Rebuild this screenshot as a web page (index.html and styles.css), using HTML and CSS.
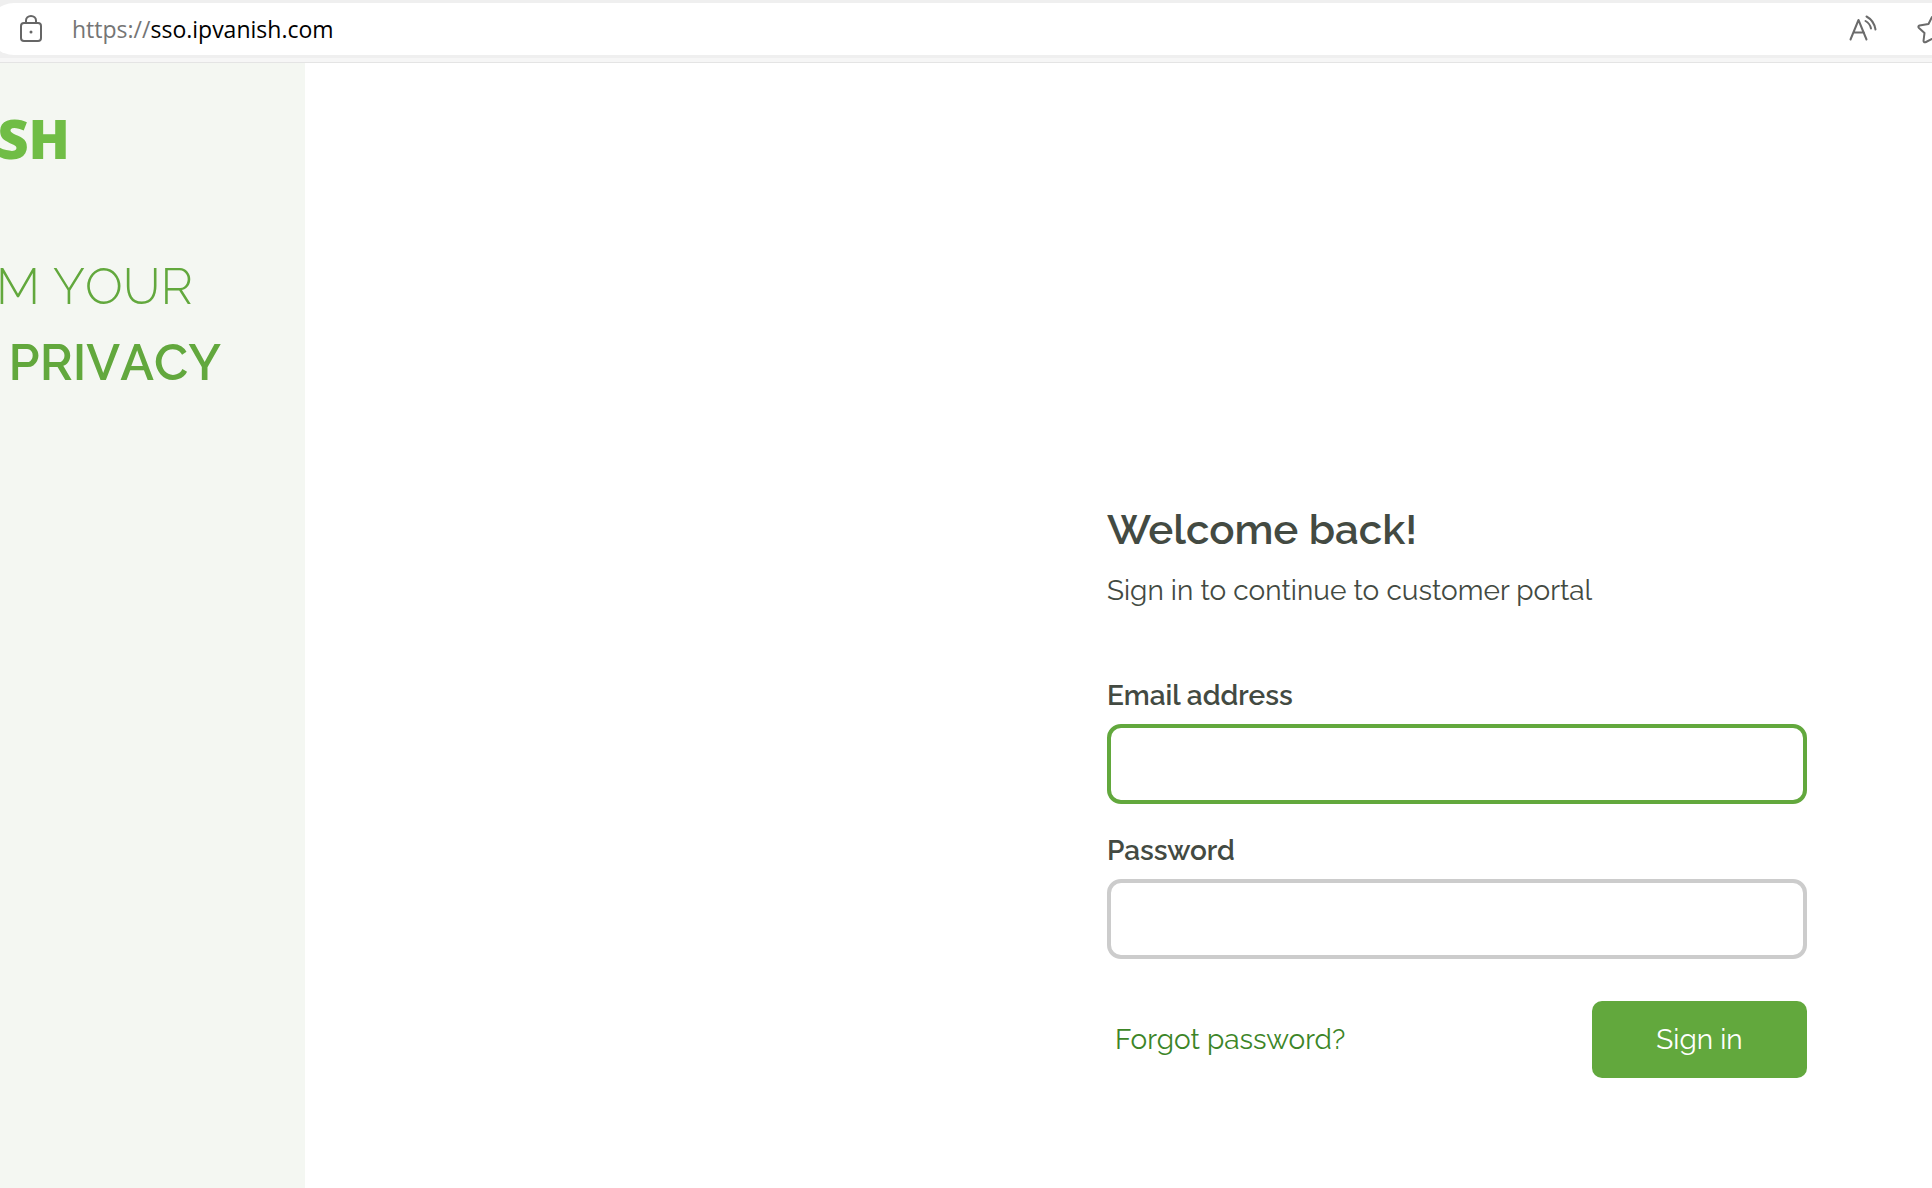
FILE: index.html
```html
<!DOCTYPE html>
<html lang="en">
<head>
<meta charset="utf-8">
<title>Sign in</title>
<link rel="stylesheet" href="styles.css">
</head>
<body>
<header class="toolbar">
  <div class="address">
    <svg class="lock" width="22" height="28" viewBox="0 0 22 28" fill="none" stroke="#666" stroke-width="2" aria-hidden="true"><rect x="1" y="8" width="20" height="18" rx="3"/><path d="M6 8V5.500a5 4.500 0 0 1 10 0V8"/><circle cx="11" cy="17" r="1.500" fill="#666" stroke="none"/></svg>
    <span class="url"><span class="scheme">https://</span>sso.ipvanish.com</span>
    <svg class="tools" width="84" height="30" viewBox="0 0 84 30" fill="none" stroke="#6b6b6b" stroke-width="2" stroke-linecap="round" stroke-linejoin="round" aria-hidden="true"><path d="M2.500 25.500 10.500 6 18.500 25.500M5.500 18.500h10.500"/><path d="M17.500 7q4.500 2.500 5.500 7.500M18.500 2.500q7.500 4 9 13"/><path d="m84 3-3.500 7-9 1.500q-2 1-.5 2.500l5.500 5-1 8q.5 2 2.500 1l6-3"/></svg>
  </div>
</header>
<div class="page">
  <aside class="brand">
    <div class="logo">SH</div>
    <p class="tagline">M YOUR</p>
    <p class="tagline strong">PRIVACY</p>
  </aside>
  <main class="content">
    <form class="signin">
      <h1>Welcome back!</h1>
      <p class="lead">Sign in to continue to customer portal</p>
      <label for="email">Email address</label>
      <input class="active" id="email" type="email">
      <label for="password">Password</label>
      <input id="password" type="password">
      <div class="actions">
        <a href="#">Forgot password?</a>
        <button type="submit">Sign in</button>
      </div>
    </form>
  </main>
</div>
</body>
</html>
```
FILE: styles.css
```css
* { box-sizing: border-box; }
body {
  margin: 0;
  min-height: 100vh;
  display: flex;
  flex-direction: column;
  background: #fff;
  color: #434a42;
  font-family: Raleway, Lato, sans-serif;
  font-size: 28px;
  line-height: 36px;
  overflow-x: hidden;
}
.toolbar {
  height: 63px;
  padding-top: 3px;
  background: linear-gradient(#efefef 58px, #f6f6f6 58px);
  border-bottom: 1px solid #e4e4e4;
}
.address {
  display: flex;
  align-items: center;
  height: 52px;
  margin-left: -12px;
  padding-left: 32px;
  background: #fff;
  border-radius: 26px 0 0 26px;
}
.url {
  flex: 1;
  margin-left: 30px;
  color: #000;
  font-family: "Segoe UI", "Open Sans", sans-serif;
  font-size: 23px;
}
.scheme { color: #757575; }
.page { flex: 1; display: flex; }
.brand {
  width: 305px;
  flex-shrink: 0;
  padding: 39px 84px 0 0;
  background: #f4f7f2;
  color: #62a83d;
  overflow: hidden;
}
.logo, .tagline {
  display: flex;
  justify-content: flex-end;
  white-space: nowrap;
}
.logo {
  padding-right: 151px;
  color: #70bd46;
  font: 800 54px/72px "Open Sans", sans-serif;
}
.tagline {
  margin: 0;
  padding-right: 28px;
  font-size: 50px;
  font-weight: 300;
  font-kerning: none;
  line-height: 76px;
}
.logo + .tagline { margin-top: 75px; }
.strong { padding-right: 0; font-weight: 600; }
.content {
  flex: 1;
  display: flex;
  justify-content: flex-end;
  padding: 441px 125px 60px 40px;
}
.signin { width: 700px; max-width: 100%; }
h1 { margin: 0; font-size: 42px; line-height: 52px; font-weight: 600; }
.lead { margin: 17px 0 69px; }
label { display: block; margin-bottom: 10px; font-weight: 600; }
input {
  display: block;
  width: 100%;
  height: 80px;
  margin-bottom: 29px;
  padding: 0 20px;
  border: 4px solid #ccc;
  border-radius: 14px;
  background: #fff;
  font: inherit;
}
.active { border-color: #62a83d; }
.actions {
  display: flex;
  align-items: center;
  justify-content: space-between;
  margin-top: 42px;
  padding-left: 8px;
}
a { color: #3c8527; text-decoration: none; }
button {
  width: 215px;
  height: 77px;
  border: 0;
  border-radius: 10px;
  background: #62a83d;
  color: #fff;
  font: inherit;
}
```
